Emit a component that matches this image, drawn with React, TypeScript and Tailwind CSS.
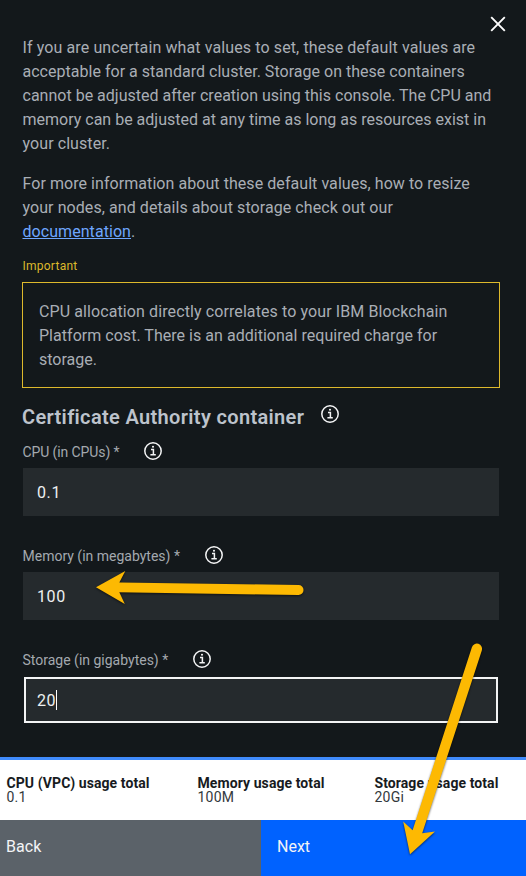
import type { ReactNode } from 'react';

function InfoIcon({ className = '' }: { className?: string }) {
  return (
    <svg viewBox="0 0 18 18" className={`h-[18px] w-[18px] shrink-0 ${className}`} fill="none" stroke="#f3f4f5">
      <circle cx="9" cy="9" r="8.2" strokeWidth="1.5" />
      <path d="M7 7.5h2.4v5M6.4 12.8h5.4" strokeWidth="1.5" />
      <circle cx="9" cy="4.8" r="1.05" fill="#f3f4f5" stroke="none" />
    </svg>
  );
}

function Line({ className = '', children }: { className?: string; children: ReactNode }) {
  return <span className={`block whitespace-nowrap ${className}`}>{children}</span>;
}

function Field({
  label,
  labelClass,
  value,
  focused = false,
}: {
  label: string;
  labelClass: string;
  value: string;
  focused?: boolean;
}) {
  return (
    <div className="h-[104px]">
      <div className="flex h-8 items-start">
        <label className={`whitespace-nowrap pl-[0.5px] pt-[7px] text-sm leading-[18px] text-[#a4a9af] ${labelClass}`}>{label}</label>
        <InfoIcon className="mt-[6px]" />
      </div>
      {focused ? (
        <div className="ml-[2px] mr-[2px] mt-px flex h-[46px] items-center border-2 border-[#f3f4f5] bg-[#252a2d] pl-[11px] text-base text-[#eef0f1]">
          <span className="pt-[2px] tracking-[0.4px]">{value}</span>
          <span className="h-5 w-px bg-white" />
        </div>
      ) : (
        <div className="mx-px flex h-12 items-center bg-[#252a2d] pl-[14px] text-base text-[#eef0f1]">
          <span className="pt-[2px] tracking-[0.6px]">{value}</span>
        </div>
      )}
    </div>
  );
}

function Total({ label, value, className }: { label: string; value: string; className: string }) {
  return (
    <div className={`shrink-0 whitespace-nowrap pl-[0.5px] pt-4 text-sm leading-[14px] text-[#171b1e] ${className}`}>
      <div className="font-bold tracking-[0.08px]">{label}</div>
      <div className="tracking-[0.25px] text-[#33383c]">{value}</div>
    </div>
  );
}

export default function App() {
  return (
    <div className="relative flex h-[876px] w-[526px] flex-col overflow-hidden bg-[#13181b] font-['Roboto',sans-serif]">
      <button aria-label="Close" className="absolute left-[490px] top-4 h-4 w-4">
        <svg viewBox="0 0 16 16" className="h-4 w-4" stroke="#fff" strokeWidth="1.9" fill="none">
          <path d="M1.2 1.2 14.8 14.8M14.8 1.2 1.2 14.8" />
        </svg>
      </button>

      <main className="h-[757px] shrink-0 pl-[22px] pr-[26px] pt-9 text-base leading-6 text-[#a9aeb5]">
        <p className="pl-[0.5px]">
          <Line className="tracking-[0.11px]">If you are uncertain what values to set, these default values are</Line>
          <Line className="tracking-[0.02px]">acceptable for a standard cluster. Storage on these containers</Line>
          <Line className="tracking-[0.01px]">cannot be adjusted after creation using this console. The CPU and</Line>
          <Line>memory can be adjusted at any time as long as resources exist in</Line>
          <Line className="tracking-[0.08px]">your cluster.</Line>
        </p>
        <p className="mt-4 pl-[0.5px]">
          <Line className="tracking-[0.06px]">For more information about these default values, how to resize</Line>
          <Line className="tracking-[0.07px]">your nodes, and details about storage check out our</Line>
          <Line className="tracking-[0.06px]">
            <a className="text-[#6ea6ff] underline decoration-1 underline-offset-1">documentation</a>.
          </Line>
        </p>

        <div className="mt-[13px] h-[18px] pl-[0.5px] text-xs leading-[18px] tracking-[0.25px] text-[#ddb92c]">Important</div>
        <div className="mt-[7px] h-[106px] w-[478px] border border-[#ddb92c] px-4 pt-[17px]">
          <Line className="tracking-[0.1px]">CPU allocation directly correlates to your IBM Blockchain</Line>
          <Line className="tracking-[0.03px]">Platform cost. There is an additional required charge for</Line>
          <Line>storage.</Line>
        </div>

        <div className="mt-[14px] flex h-[34px] items-start">
          <h2 className="w-[299px] whitespace-nowrap text-xl font-semibold leading-[30px] tracking-[0.34px] text-[#bdc3cc]">
            Certificate Authority container
          </h2>
          <InfoIcon className="mt-[3px]" />
        </div>

        <Field label="CPU (in CPUs) *" labelClass="w-[122px] tracking-[-0.1px]" value="0.1" />
        <Field label="Memory (in megabytes) *" labelClass="w-[183px]" value="100" />
        <Field label="Storage (in gigabytes) *" labelClass="w-[171px]" value="20" focused />
      </main>

      <section className="flex h-[63px] shrink-0 border-t-[3px] border-[#408bfc] bg-white pl-[6px]">
        <Total label="CPU (VPC) usage total" value="0.1" className="w-[191px]" />
        <Total label="Memory usage total" value="100M" className="w-[177px]" />
        <Total label="Storage usage total" value="20Gi" className="w-[140px]" />
      </section>
      <footer className="flex h-14 shrink-0 text-base text-[#f3f4f6]">
        <button className="w-[261px] bg-[#5b6269] pb-[3px] pl-[6px] text-left tracking-[0.1px]">Back</button>
        <button className="flex-1 bg-[#0062ff] pb-[3px] pl-4 text-left">Next</button>
      </footer>

      <svg
        viewBox="0 0 526 876"
        className="pointer-events-none absolute left-0 top-0 h-[876px] w-[526px] drop-shadow-[0_1px_1px_rgba(0,0,0,0.6)]"
        fill="#fdb902"
      >
        <path d="M96 587.2 125.3 571 119.3 582.4 298.5 585A5 5 0 0 1 298.5 595L119.3 592.3 124.8 604Z" />
        <path d="M410 854.3 403.2 821.5 412.6 830.2 471.9 647.2A5 5 0 0 1 481.8 650.4L422.2 833.3 435 831.4Z" />
      </svg>
    </div>
  );
}
